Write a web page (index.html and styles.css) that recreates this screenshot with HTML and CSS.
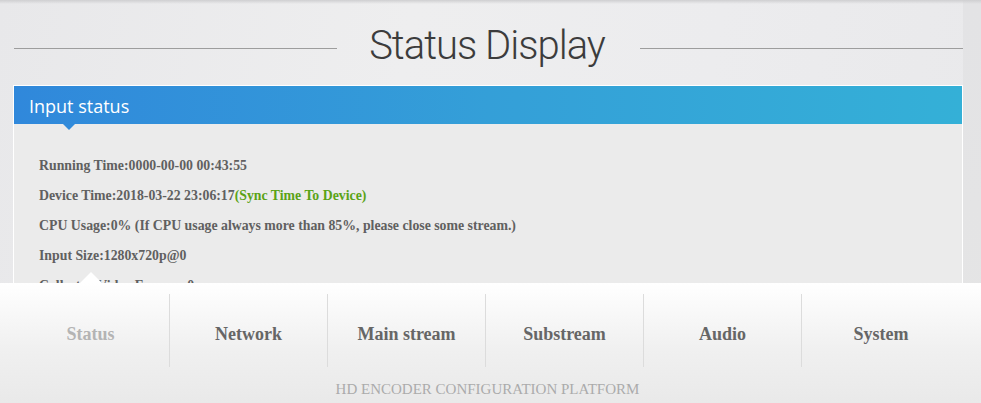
FILE: index.html
```html
<!DOCTYPE html>
<html>
<head>
<meta charset="utf-8">
<title>Status Display</title>
<link rel="stylesheet" href="styles.css">
</head>
<body>
<div class="page">
  <div class="title-row">
    <span class="rule"></span>
    <h1 class="title">Status Display</h1>
    <span class="rule"></span>
  </div>
  <div class="panel">
    <div class="panel-head">Input status</div>
    <div class="panel-body">
      <p class="row">Running Time:0000-00-00 00:43:55</p>
      <p class="row">Device Time:2018-03-22 23:06:17<span class="sync">(Sync Time To Device)</span></p>
      <p class="row">CPU Usage:0% (If CPU usage always more than 85%, please close some stream.)</p>
      <p class="row">Input Size:1280x720p@0</p>
      <p class="row">Collected Video Frames: 0</p>
      <p class="row">Collected Audio Frames: 0</p>
    </div>
  </div>
</div>
<div class="nav">
  <div class="nav-items">
    <div class="nav-item active">Status</div>
    <div class="nav-item">Network</div>
    <div class="nav-item">Main stream</div>
    <div class="nav-item">Substream</div>
    <div class="nav-item">Audio</div>
    <div class="nav-item last">System</div>
  </div>
  <div class="footer">HD ENCODER CONFIGURATION PLATFORM</div>
</div>
</body>
</html>
```
FILE: styles.css
```css
html, body {
  margin: 0;
  padding: 0;
  height: 100%;
  overflow: hidden;
}
body {
  background: linear-gradient(#cfcfd1 0, #e3e3e5 4px, #e5e5e5 100%);
  font-family: "Liberation Serif", "Times New Roman", serif;
}
.page {
  width: 963px;
  height: 403px;
  background:
    linear-gradient(#cfcfd1 0, rgba(236,236,238,0) 4px),
    linear-gradient(100deg, #e8e8ea 0%, #eeeeef 40%, #ececee 70%, #e9e9eb 100%);
}
.title-row {
  display: flex;
  align-items: center;
  height: 85px;
  padding-left: 14px;
  gap: 32px;
}
.rule {
  flex: 1;
  height: 1px;
  background: #9d9d9d;
  margin-top: 11px;
}
.title {
  margin: 0;
  font-family: Roboto, "Liberation Sans", sans-serif;
  font-weight: 300;
  font-size: 40px;
  letter-spacing: -1px;
  color: #3c3c3c;
  line-height: 50px;
  padding-top: 7px;
  padding-right: 3px;
}
.panel {
  margin-left: 13px;
  width: 948px;
  border: 1px solid #fff;
  border-bottom: 0;
  background: #ebebeb;
}
.panel-head {
  position: relative;
  height: 36px;
  padding: 2px 0 0 15px;
  line-height: 36px;
  background: linear-gradient(90deg, #3088db 0%, #349fd8 50%, #34b0d7 100%);
  font-family: "Open Sans", "Noto Sans", sans-serif;
  font-size: 18px;
  color: #fff;
}
.panel-head::after {
  content: "";
  position: absolute;
  left: 49px;
  top: 38px;
  border-left: 6px solid transparent;
  border-right: 6px solid transparent;
  border-top: 6px solid #318bdb;
}
.panel-body {
  padding: 27px 0 0 25px;
}
.row {
  margin: 0;
  font-weight: bold;
  font-size: 13.8px;
  line-height: 30px;
  color: #606060;
}
.sync {
  color: #5aa316;
}
.nav {
  position: fixed;
  left: 0;
  right: 0;
  top: 283px;
  bottom: 0;
  background: linear-gradient(#ffffff 0%, #f0f0f0 55%, #e9e9e9 100%);
}
.nav::before {
  content: "";
  position: absolute;
  left: 80px;
  top: -11px;
  border-left: 11px solid transparent;
  border-right: 11px solid transparent;
  border-bottom: 11px solid #ffffff;
}
.nav-items {
  display: flex;
  padding-left: 12px;
  margin-top: 11px;
}
.nav-item {
  box-sizing: border-box;
  width: 158px;
  height: 73px;
  padding-top: 7px;
  line-height: 66px;
  text-align: center;
  border-right: 1px solid #dcdcdc;
  font-size: 18px;
  font-weight: bold;
  color: #666666;
}
.nav-item.active {
  color: #b4b4b4;
}
.nav-item.last {
  border-right: 0;
}
.footer {
  margin-top: 12px;
  text-align: center;
  padding-right: 6px;
  font-size: 15px;
  line-height: 20px;
  color: #ababab;
}
```
